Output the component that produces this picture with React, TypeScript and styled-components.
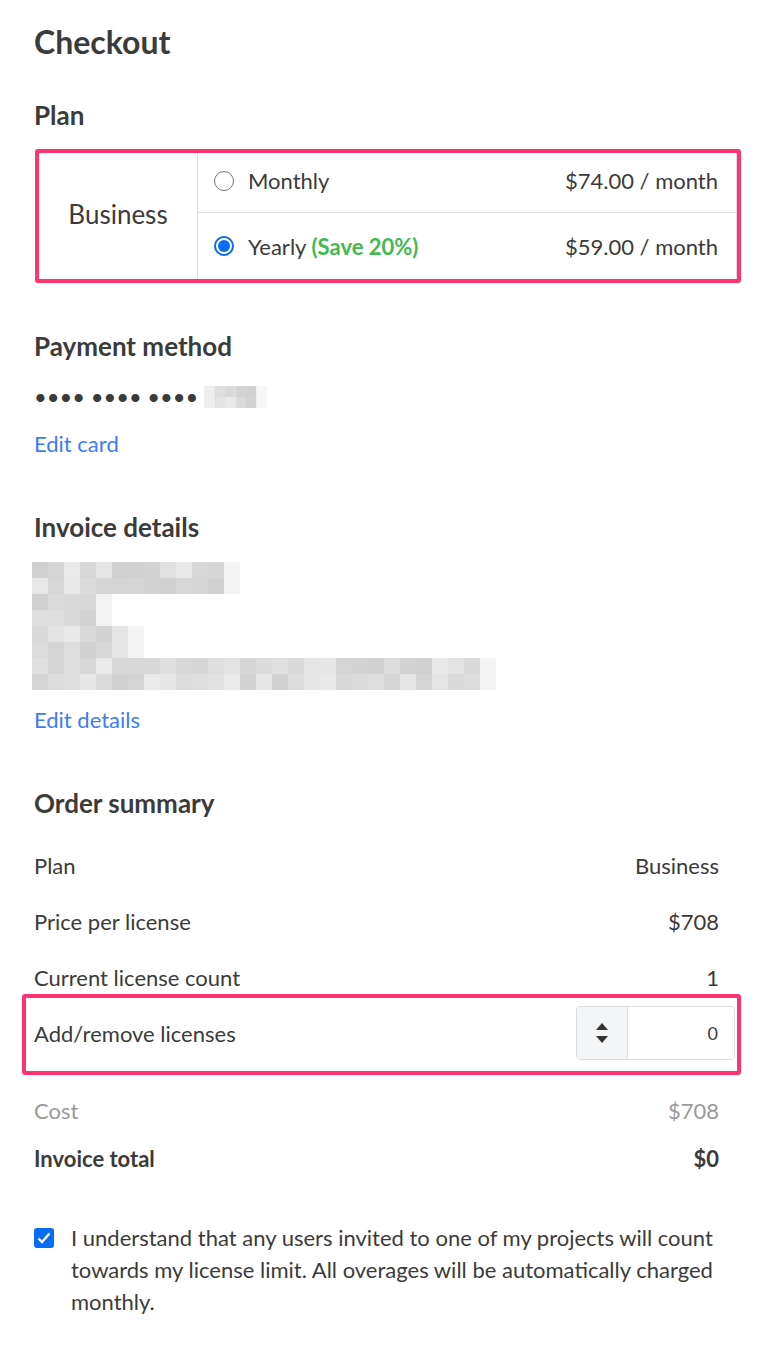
import React, { useState } from 'react';
import styled, { createGlobalStyle } from 'styled-components';

const GlobalStyle = createGlobalStyle`
  * { box-sizing: border-box; }
  body {
    margin: 0;
    background: #fff;
    font-family: Lato, 'Open Sans', Arial, sans-serif;
    color: #3b3b3b;
  }
`;

const Page = styled.div`
  width: 772px;
  padding: 24px 34px 40px;
`;

const Title = styled.h1`
  margin: 0;
  font-size: 32px;
  line-height: 36px;
  font-weight: 700;
`;

const SectionTitle = styled.h2<{ $top: number }>`
  margin: ${(p) => p.$top}px 0 0;
  font-size: 26px;
  line-height: 28px;
  font-weight: 700;
`;

const Highlight = styled.div`
  margin: 20px -3px 0 1px;
  border: 4px solid #fe3370;
  border-radius: 3px;
`;

const PlanTable = styled.div`
  display: grid;
  grid-template-columns: 159px 1fr;
  border-right: 1px solid #dedede;
`;

const PlanName = styled.div`
  display: flex;
  align-items: center;
  justify-content: center;
  padding-bottom: 4px;
  font-size: 26px;
  border-right: 1px solid #dedede;
`;

const Options = styled.div`
  display: flex;
  flex-direction: column;
`;

const OptionRow = styled.label<{ $first?: boolean }>`
  display: flex;
  align-items: center;
  height: ${(p) => (p.$first ? 60 : 66)}px;
  padding: ${(p) => (p.$first ? '0 18px 4px 16px' : '0 18px 0 16px')};
  border-bottom: ${(p) => (p.$first ? '1px solid #dedede' : 'none')};
  font-size: 22px;
  cursor: pointer;
`;

const Radio = styled.span<{ $checked: boolean }>`
  width: 20px;
  height: 20px;
  border-radius: 50%;
  border: ${(p) => (p.$checked ? '2px solid #0a6cf5' : '1.5px solid #767676')};
  display: flex;
  align-items: center;
  justify-content: center;
  margin-right: 14px;
  flex-shrink: 0;
  &::after {
    content: '';
    width: 12px;
    height: 12px;
    border-radius: 50%;
    background: ${(p) => (p.$checked ? '#0a6cf5' : 'transparent')};
  }
`;

const OptionLabel = styled.span`
  flex: 1;
`;

const Save = styled.span`
  color: #42b952;
  font-weight: 700;
`;

const Price = styled.span``;

const Line = styled.div<{ $top: number }>`
  margin-top: ${(p) => p.$top}px;
  font-size: 22px;
  line-height: 28px;
  display: flex;
  align-items: center;
`;

const Dots = styled.span`
  font-size: 22px;
  margin-right: 6px;
  color: #3b3b3b;
`;

const Link = styled.a<{ $top: number }>`
  display: block;
  margin-top: ${(p) => p.$top}px;
  font-size: 22px;
  line-height: 28px;
  color: #3b7df2;
  text-decoration: none;
`;

const BlurBox = styled.svg`
  display: block;
  margin: 21px 0 0 -2px;
`;

const Summary = styled.div`
  margin-top: 20px;
  display: flex;
  flex-direction: column;
`;

const Row = styled.div<{ $h?: number; $muted?: boolean; $bold?: boolean }>`
  display: flex;
  align-items: center;
  justify-content: space-between;
  height: ${(p) => p.$h ?? 56}px;
  padding-right: 19px;
  font-size: 22px;
  color: ${(p) => (p.$muted ? '#9a9a9a' : '#3b3b3b')};
  font-weight: ${(p) => (p.$bold ? 700 : 400)};
`;

const LicenseRow = styled(Row)`
  position: relative;
  padding-right: 3px;
  margin-bottom: 25px;
  &::after {
    content: '';
    position: absolute;
    top: -11px;
    bottom: -14px;
    left: -12px;
    right: -3px;
    border: 4px solid #fe3370;
    border-radius: 3px;
    pointer-events: none;
  }
`;

const NumberBox = styled.div`
  display: flex;
  width: 159px;
  height: 54px;
  border: 1px solid #dcdcdc;
  border-radius: 4px;
  overflow: hidden;
`;

const Spinner = styled.div`
  width: 51px;
  background: #f4f5f7;
  border-right: 1px solid #dcdcdc;
  display: flex;
  flex-direction: column;
  align-items: center;
  justify-content: center;
  gap: 6px;
`;

const NumberInput = styled.input`
  flex: 1;
  width: 0;
  border: none;
  outline: none;
  text-align: right;
  padding-right: 16px;
  font-family: inherit;
  font-size: 18px;
  color: #3b3b3b;
`;

const Agree = styled.label`
  display: flex;
  align-items: flex-start;
  margin-top: 40px;
  font-size: 22px;
  line-height: 32px;
  cursor: pointer;
`;

const Check = styled.span`
  width: 20px;
  height: 20px;
  margin-top: 6px;
  margin-right: 17px;
  border-radius: 3px;
  background: #0a6cf5;
  display: flex;
  align-items: center;
  justify-content: center;
  flex-shrink: 0;
`;

const shade = (r: number, c: number) => {
  const v = Math.abs(Math.sin(r * 12.9898 + c * 78.233) * 43758.5453) % 1;
  const g = Math.round(0xd0 + v * 0x1a);
  return `rgb(${g},${g},${g})`;
};

const blurRows = [12, 12, 4, 4, 6, 6, 28, 28];

const InvoiceBlur = () => (
  <BlurBox width={470} height={128} viewBox="0 0 470 128">
    {blurRows.map((n, r) =>
      Array.from({ length: n + 1 }).map((_, c) => (
        <rect
          key={`${r}-${c}`}
          x={c * 16}
          y={r * 16}
          width={16}
          height={16}
          fill={c === n ? '#f3f3f3' : shade(r, c)}
        />
      )),
    )}
  </BlurBox>
);

const CardBlur = () => (
  <svg width={64} height={22} viewBox="0 0 64 22">
    {[0, 1].map((r) =>
      [0, 1, 2, 3, 4, 5].map((c) => (
        <rect
          key={`${r}-${c}`}
          x={c * 10.5}
          y={r * 11}
          width={10.5}
          height={11}
          fill={c === 5 ? '#f6f6f6' : c === 0 ? '#eeeeee' : shade(r + 3, c)}
        />
      )),
    )}
  </svg>
);

export default function App() {
  const [plan, setPlan] = useState<'monthly' | 'yearly'>('yearly');
  const [delta, setDelta] = useState(0);

  return (
    <Page>
      <GlobalStyle />
      <Title>Checkout</Title>

      <SectionTitle $top={41}>Plan</SectionTitle>
      <Highlight>
        <PlanTable>
          <PlanName>Business</PlanName>
          <Options>
            <OptionRow $first onClick={() => setPlan('monthly')}>
              <Radio $checked={plan === 'monthly'} />
              <OptionLabel>Monthly</OptionLabel>
              <Price>$74.00 / month</Price>
            </OptionRow>
            <OptionRow onClick={() => setPlan('yearly')}>
              <Radio $checked={plan === 'yearly'} />
              <OptionLabel>
                Yearly <Save>(Save 20%)</Save>
              </OptionLabel>
              <Price>$59.00 / month</Price>
            </OptionRow>
          </Options>
        </PlanTable>
      </Highlight>

      <SectionTitle $top={49}>Payment method</SectionTitle>
      <Line $top={23}>
        <Dots>•••• •••• ••••</Dots>
        <CardBlur />
      </Line>
      <Link $top={19} href="#">
        Edit card
      </Link>

      <SectionTitle $top={55}>Invoice details</SectionTitle>
      <InvoiceBlur />
      <Link $top={16} href="#">
        Edit details
      </Link>

      <SectionTitle $top={55}>Order summary</SectionTitle>
      <Summary>
        <Row>
          <span>Plan</span>
          <span>Business</span>
        </Row>
        <Row>
          <span>Price per license</span>
          <span>$708</span>
        </Row>
        <Row>
          <span>Current license count</span>
          <span>1</span>
        </Row>
        <LicenseRow>
          <span>Add/remove licenses</span>
          <NumberBox>
            <Spinner>
              <svg width="12" height="7" viewBox="0 0 12 7" onClick={() => setDelta(delta + 1)}>
                <path d="M6 0 L12 7 L0 7 Z" fill="#333" />
              </svg>
              <svg width="12" height="7" viewBox="0 0 12 7" onClick={() => setDelta(delta - 1)}>
                <path d="M0 0 L12 0 L6 7 Z" fill="#333" />
              </svg>
            </Spinner>
            <NumberInput value={delta} onChange={(e) => setDelta(Number(e.target.value) || 0)} />
          </NumberBox>
        </LicenseRow>
        <Row $h={48} $muted>
          <span>Cost</span>
          <span>$708</span>
        </Row>
        <Row $h={48} $bold>
          <span>Invoice total</span>
          <span>$0</span>
        </Row>
      </Summary>

      <Agree>
        <Check>
          <svg width="14" height="12" viewBox="0 0 14 12">
            <path d="M1.5 6.5 L5 10 L12.5 1.5" stroke="#fff" strokeWidth="2.4" fill="none" />
          </svg>
        </Check>
        <span>
          I understand that any users invited to one of my projects will count towards my license
          limit. All overages will be automatically charged monthly.
        </span>
      </Agree>
    </Page>
  );
}
